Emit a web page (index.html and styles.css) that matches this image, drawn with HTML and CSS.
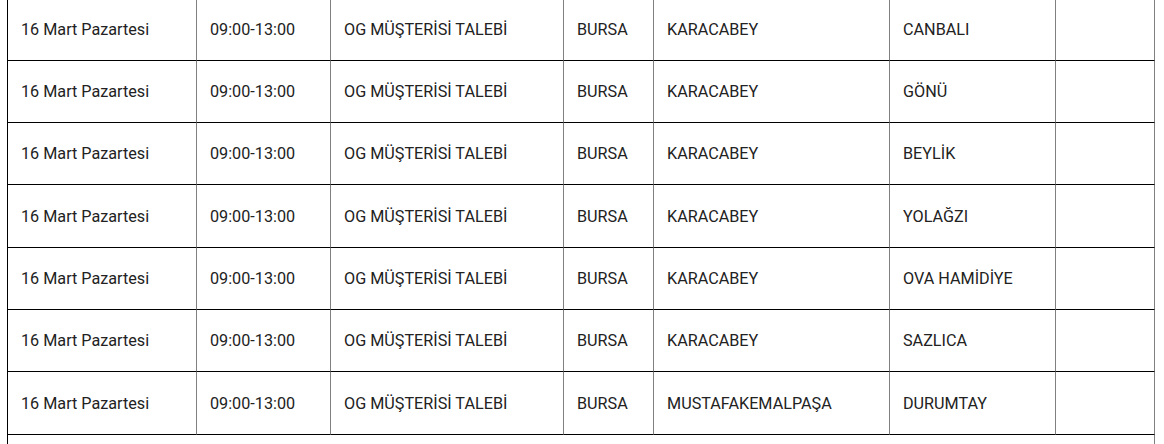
FILE: index.html
```html
<!DOCTYPE html>
<html lang="tr">
<head>
<meta charset="utf-8">
<link rel="stylesheet" href="styles.css">
</head>
<body>
<table class="outages">
  <colgroup>
    <col class="c-date"><col class="c-time"><col class="c-reason"><col class="c-city"><col class="c-district"><col class="c-area"><col class="c-extra">
  </colgroup>
  <tbody>
    <tr><td>16 Mart Pazartesi</td><td>09:00-13:00</td><td>OG MÜŞTERİSİ TALEBİ</td><td>BURSA</td><td>KARACABEY</td><td>CANBALI</td><td></td></tr>
    <tr><td>16 Mart Pazartesi</td><td>09:00-13:00</td><td>OG MÜŞTERİSİ TALEBİ</td><td>BURSA</td><td>KARACABEY</td><td>GÖNÜ</td><td></td></tr>
    <tr><td>16 Mart Pazartesi</td><td>09:00-13:00</td><td>OG MÜŞTERİSİ TALEBİ</td><td>BURSA</td><td>KARACABEY</td><td>BEYLİK</td><td></td></tr>
    <tr><td>16 Mart Pazartesi</td><td>09:00-13:00</td><td>OG MÜŞTERİSİ TALEBİ</td><td>BURSA</td><td>KARACABEY</td><td>YOLAĞZI</td><td></td></tr>
    <tr><td>16 Mart Pazartesi</td><td>09:00-13:00</td><td>OG MÜŞTERİSİ TALEBİ</td><td>BURSA</td><td>KARACABEY</td><td>OVA HAMİDİYE</td><td></td></tr>
    <tr><td>16 Mart Pazartesi</td><td>09:00-13:00</td><td>OG MÜŞTERİSİ TALEBİ</td><td>BURSA</td><td>KARACABEY</td><td>SAZLICA</td><td></td></tr>
    <tr><td>16 Mart Pazartesi</td><td>09:00-13:00</td><td>OG MÜŞTERİSİ TALEBİ</td><td>BURSA</td><td>MUSTAFAKEMALPAŞA</td><td>DURUMTAY</td><td></td></tr>
    <tr class="next"><td colspan="7"></td></tr>
  </tbody>
</table>
</body>
</html>
```
FILE: styles.css
```css
html, body {
  margin: 0;
  padding: 0;
  background: #ffffff;
}

body {
  font-family: Roboto, "Liberation Sans", Arial, sans-serif;
  font-size: 16.2px;
  color: #222222;
  overflow: hidden;
}

.outages {
  margin: -1.5px 0 0 7px;
  width: 1148px;
  table-layout: fixed;
  border-collapse: separate;
  border-spacing: 0;
}

.c-date { width: 190px; }
.c-time { width: 134px; }
.c-reason { width: 233px; }
.c-city { width: 90px; }
.c-district { width: 236px; }
.c-area { width: 166px; }
.c-extra { width: 99px; }

.outages tr {
  height: 62.33px;
}

.outages td {
  box-sizing: border-box;
  padding: 1px 0 0 13px;
  vertical-align: middle;
  line-height: 20px;
  white-space: nowrap;
  border-right: 1px solid #808080;
  border-bottom: 1px solid #000000;
}

.outages td:first-child {
  border-left: 1px solid #000000;
}

.outages .next td {
  border-bottom: none;
}
```
